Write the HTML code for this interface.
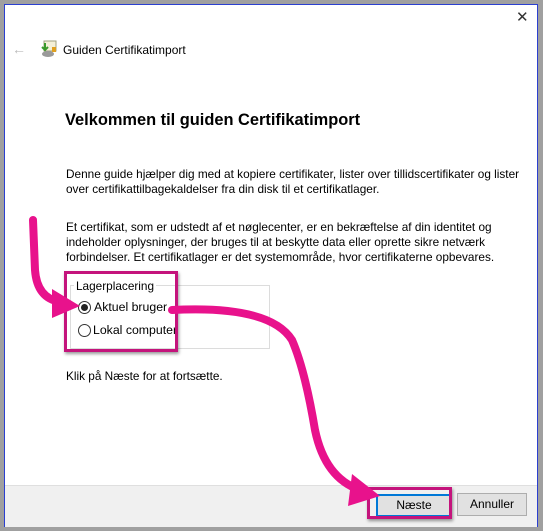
<!DOCTYPE html>
<html><head><style>
body{margin:0;width:543px;height:531px;background:#a0a0a0;position:relative;overflow:hidden;font-family:"Liberation Sans",sans-serif;font-size:11.8px;color:#000}
.win{position:absolute;left:4px;top:4px;width:532px;height:521px;background:#fff;border:1px solid #2b3fd0}
.foot{position:absolute;left:5px;top:485px;width:532px;height:41px;background:#f0f0f0;border-top:1px solid #dfdfdf}
.t{position:absolute;white-space:nowrap}
.btn{position:absolute;height:21px;background:#e1e1e1;border:1px solid #adadad;text-align:center;line-height:21px;font-size:12px}
</style></head><body>
<div class="win"></div>
<div class="foot"></div>
<div class="t" style="left:516px;top:8px;font-size:15px;color:#333">✕</div>
<div class="t" style="left:12px;top:41px;font-size:14px;color:#bbb">←</div>
<svg style="position:absolute;left:40px;top:40px" width="18" height="18"><rect x="4" y="1" width="12" height="10" fill="#f4f0d8" stroke="#a0a080"/><rect x="12" y="7" width="4" height="5" fill="#e0a020"/><ellipse cx="8" cy="14" rx="6" ry="3" fill="#9a9a9a"/><path d="M5 3 L5 10 M2 7 L5 10 L8 7" stroke="#3a9a2a" stroke-width="2" fill="none"/></svg>
<div class="t" style="left:63px;top:43px;font-size:12px">Guiden Certifikatimport</div>
<div class="t" style="left:65px;top:111px;font-size:16.4px;font-weight:bold">Velkommen til guiden Certifikatimport</div>
<div class="t" style="left:66px;top:167px;line-height:15px">Denne guide hjælper dig med at kopiere certifikater, lister over tillidscertifikater og lister<br>over certifikattilbagekaldelser fra din disk til et certifikatlager.</div>
<div class="t" style="left:66px;top:220px;line-height:15px">Et certifikat, som er udstedt af et nøglecenter, er en bekræftelse af din identitet og<br>indeholder oplysninger, der bruges til at beskytte data eller oprette sikre netværk<br>forbindelser. Et certifikatlager er det systemområde, hvor certifikaterne opbevares.</div>
<div style="position:absolute;left:70px;top:285px;width:198px;height:62px;border:1px solid #dcdcdc"></div>
<div class="t" style="left:74px;top:279px;background:#fff;padding:0 2px">Lagerplacering</div>
<div style="position:absolute;left:78px;top:301px;width:11px;height:11px;border:1px solid #333;border-radius:50%"></div>
<div style="position:absolute;left:81px;top:304px;width:7px;height:7px;background:#222;border-radius:50%"></div>
<div class="t" style="left:94px;top:300px;font-size:12.3px">Aktuel bruger</div>
<div style="position:absolute;left:78px;top:324px;width:11px;height:11px;border:1px solid #333;border-radius:50%"></div>
<div class="t" style="left:93px;top:323px;font-size:12.3px">Lokal computer</div>
<div style="position:absolute;left:64px;top:271px;width:108px;height:75px;border:3px solid #c4147c;box-shadow:1px 2px 3px rgba(0,0,0,.4)"></div>
<div class="t" style="left:66px;top:369px">Klik på Næste for at fortsætte.</div>
<div class="btn" style="left:376px;top:494px;width:72px;border:2px solid #0078d7;height:19px;line-height:19px">Næste</div>
<div class="btn" style="left:457px;top:493px;width:68px">Annuller</div>
<div style="position:absolute;left:367px;top:487px;width:85px;height:32px;border:3px solid #c4147c;box-sizing:border-box;box-shadow:1px 2px 3px rgba(0,0,0,.4)"></div>
<svg style="position:absolute;left:0;top:0" width="543" height="531">
<g fill="none" stroke="#e8128c" stroke-width="8" stroke-linecap="round">
<path d="M33 220 L35 270 Q37 298 60 302"/>
<path d="M172 310 Q270 305 292 340 Q305 370 315 430 Q325 478 360 490"/>
</g>
<path d="M52 289 L80 306 L52 318 Z" fill="#e8128c"/>
<path d="M352 474 L380 496 L348 506 Z" fill="#e8128c"/>
</svg>
</body></html>
